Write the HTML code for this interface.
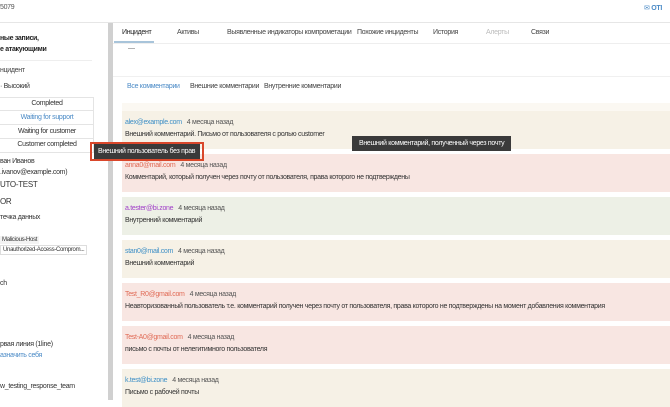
<!DOCTYPE html>
<html><head><meta charset="utf-8"><style>
*{margin:0;padding:0;box-sizing:border-box}
body{width:670px;height:400px;overflow:hidden;background:#fff;font-family:"Liberation Sans","Noto Sans CJK SC",sans-serif;font-size:7px;letter-spacing:-0.3px;color:#333;position:relative}
.a{position:absolute;white-space:nowrap}
.card{position:absolute;left:122px;width:548px;height:38px}
.be{background:#f6f1e6}.pk{background:#f8e6e2}.gr{background:#edf0e6}
.n{position:absolute;left:3px;top:8px}
.t{position:absolute;left:3px;top:20px;color:#333}
.tm{color:#555;margin-left:5px}
.tip{position:absolute;background:#3a3a3a;color:#fff;font-size:7px;padding:0 7px;height:15px;line-height:15px;white-space:nowrap}
</style></head><body>
<div class="a" style="left:0;top:4px;color:#555">5079</div>
<div class="a" style="left:644px;top:4px;color:#4a8ac6">&#9993; <b>OTI</b></div>
<div class="a" style="left:0;top:22px;width:670px;height:1px;background:#e6e6e6"></div>
<div class="a" style="left:108px;top:23px;width:5px;height:377px;background:#d0d0d0"></div>
<div class="a" style="left:0;top:33px;font-weight:bold;line-height:11px;color:#222">ные записи,<br>е атакующими</div>
<div class="a" style="left:0;top:60px;width:92px;height:1px;background:#eee"></div>
<div class="a" style="left:0;top:67px;color:#444">нцидент</div>
<div class="a" style="left:0;top:83px;color:#333">· Высокий</div>
<div class="a" style="left:0;top:97px;width:94px;height:56px;border:1px solid #e4e4e4;border-left:none"></div>
<div class="a" style="left:0;top:110px;width:94px;height:1px;background:#e4e4e4"></div>
<div class="a" style="left:0;top:124px;width:94px;height:1px;background:#e4e4e4"></div>
<div class="a" style="left:0;top:138px;width:94px;height:1px;background:#e4e4e4"></div>
<div class="a" style="left:0;top:100px;width:94px;text-align:center">Completed</div>
<div class="a" style="left:0;top:114px;width:94px;text-align:center;color:#4a8ac6">Waiting for support</div>
<div class="a" style="left:0;top:128px;width:94px;text-align:center">Waiting for customer</div>
<div class="a" style="left:0;top:141px;width:94px;text-align:center">Customer completed</div>
<div class="a" style="left:0;top:156px;line-height:11px">ван Иванов<br>.ivanov@example.com)</div>
<div class="a" style="left:0;top:180px;font-size:8px">UTO-TEST</div>
<div class="a" style="left:0;top:197px;font-size:8px">OR</div>
<div class="a" style="left:0;top:214px">течка данных</div>
<div class="a" style="left:0;top:236px;font-size:6px;background:#f3f3f3;padding:1px 2px">Malicious-Host</div>
<div class="a" style="left:0;top:245px;font-size:6px;border:1px solid #ddd;padding:1px 2px">Unauthorized-Access-Comprom...</div>
<div class="a" style="left:0;top:280px">ch</div>
<div class="a" style="left:0;top:341px">рвая линия (1line)</div>
<div class="a" style="left:0;top:352px;color:#4a8ac6">азначить себя</div>
<div class="a" style="left:0;top:383px">w_testing_response_team</div>
<div class="a" style="left:122px;top:29px;color:#222">Инцидент</div>
<div class="a" style="left:114px;top:41px;width:40px;height:2px;background:#a8c4da"></div>
<div class="a" style="left:177px;top:29px;color:#444">Активы</div>
<div class="a" style="left:227px;top:29px;color:#444">Выявленные индикаторы компрометации</div>
<div class="a" style="left:357px;top:29px;color:#444">Похожие инциденты</div>
<div class="a" style="left:433px;top:29px;color:#444">История</div>
<div class="a" style="left:486px;top:29px;color:#bbb">Алерты</div>
<div class="a" style="left:531px;top:29px;color:#444">Связи</div>
<div class="a" style="left:113px;top:43px;width:557px;height:1px;background:#eee"></div>
<div class="a" style="left:128px;top:45px;color:#666">—</div>
<div class="a" style="left:113px;top:76px;width:557px;height:1px;background:#f0f0f0"></div>
<div class="a" style="left:127px;top:83px;color:#4a8ac6">Все комментарии</div>
<div class="a" style="left:190px;top:83px;color:#444">Внешние комментарии</div>
<div class="a" style="left:264px;top:83px;color:#444">Внутренние комментарии</div>
<div class="a" style="left:122px;top:103px;width:548px;height:8px;background:#fbf8f2"></div>
<div class="card be" style="top:111px"><span class="n"><span style="color:#3d8fc6">alex@example.com</span><span class="tm">4 месяца назад</span></span><span class="t">Внешний комментарий. Письмо от пользователя с ролью customer</span></div>
<div class="card pk" style="top:154px"><span class="n"><span style="color:#e06a55">anna0@mail.com</span><span class="tm">4 месяца назад</span></span><span class="t">Комментарий, который получен через почту от пользователя, права которого не подтверждены</span></div>
<div class="card gr" style="top:197px"><span class="n"><span style="color:#a040c8">a.tester@bi.zone</span><span class="tm">4 месяца назад</span></span><span class="t">Внутренний комментарий</span></div>
<div class="card be" style="top:240px"><span class="n"><span style="color:#3d8fc6">stan0@mail.com</span><span class="tm">4 месяца назад</span></span><span class="t">Внешний комментарий</span></div>
<div class="card pk" style="top:283px"><span class="n"><span style="color:#e06a55">Test_R0@gmail.com</span><span class="tm">4 месяца назад</span></span><span class="t">Неавторизованный пользователь т.е. комментарий получен через почту от пользователя, права которого не подтверждены на момент добавления комментария</span></div>
<div class="card pk" style="top:326px"><span class="n"><span style="color:#e06a55">Test-A0@gmail.com</span><span class="tm">4 месяца назад</span></span><span class="t">письмо с почты от нелегитимного пользователя</span></div>
<div class="card be" style="top:369px"><span class="n"><span style="color:#3d8fc6">k.test@bi.zone</span><span class="tm">4 месяца назад</span></span><span class="t">Письмо с рабочей почты</span></div>
<div class="tip" style="left:352px;top:136px">Внешний комментарий, полученный через почту</div>
<div class="a" style="left:90px;top:142px;width:114px;height:19px;border:2px solid #d9472b"></div>
<div class="tip" style="left:94px;top:144px;width:106px;padding:0 4px">Внешний пользователь без прав</div>
</body></html>
